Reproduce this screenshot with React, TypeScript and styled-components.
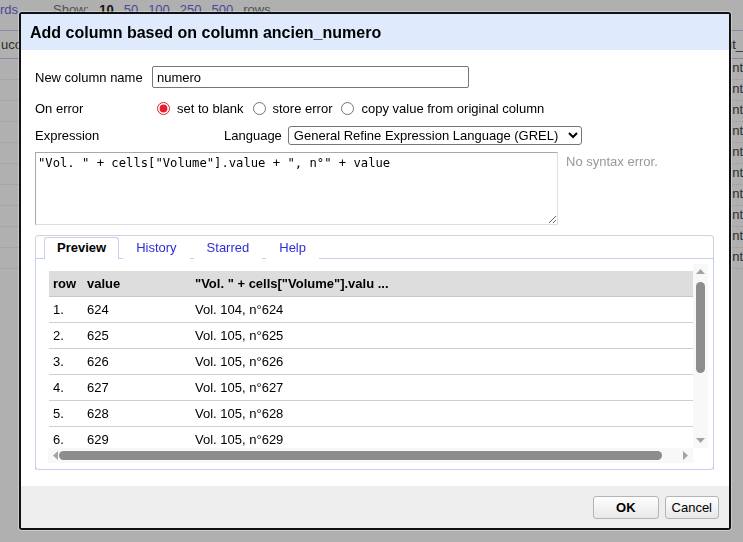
import React from "react";
import styled, { createGlobalStyle } from "styled-components";

const GlobalStyle = createGlobalStyle`
  html, body {
    margin: 0;
    padding: 0;
  }
  body {
    width: 743px;
    height: 542px;
    overflow: hidden;
    background: #fff;
    font-family: "Liberation Sans", Arial, sans-serif;
    font-size: 13px;
    color: #000;
  }
`;

/* ---------- page behind the dialog ---------- */

const Page = styled.div`
  position: relative;
  width: 743px;
  height: 542px;
  overflow: hidden;
`;

const ViewBar = styled.div`
  display: flex;
  gap: 10px;
  height: 28px;
  padding-top: 2px;
  line-height: 16px;
  white-space: nowrap;
  color: #777;
`;

const PageLink = styled.span<{ $current?: boolean }>`
  color: ${p => (p.$current ? "#222" : "#6b6be0")};
  font-weight: ${p => (p.$current ? "bold" : "normal")};
`;

const ShowLabel = styled.span`
  margin-left: 25px;
`;

const BgRow = styled.div<{ $head?: boolean }>`
  display: flex;
  height: ${p => (p.$head ? "27px" : "19px")};
  line-height: ${p => (p.$head ? "27px" : "16px")};
  padding-top: ${p => (p.$head ? "0" : "1px")};
  border-top: ${p => (p.$head ? "1px solid #c8c8ee" : "none")};
  border-bottom: ${p => (p.$head ? "1px solid #c8c8ee" : "1px dotted #e2e2e2")};
  color: #444;
  white-space: nowrap;
`;

const BgLeftCell = styled.div`
  width: 732px;
  padding-left: 1px;
`;

const BgRightCell = styled.div`
  flex: 1;
`;

const Overlay = styled.div`
  position: fixed;
  inset: 0;
  background: rgba(0, 0, 0, 0.31);
`;

/* ---------- dialog ---------- */

const Dialog = styled.div`
  position: absolute;
  left: 19px;
  top: 12px;
  width: 712px;
  height: 518px;
  box-sizing: border-box;
  border: 2px solid #111;
  border-radius: 3px;
  background: #fff;
  box-shadow: 0 0 0 1px rgba(255, 255, 255, 0.35);
  display: flex;
  flex-direction: column;
  overflow: hidden;
`;

const DialogHeader = styled.div`
  flex: none;
  height: 36px;
  display: flex;
  align-items: center;
  padding: 1px 0 0 9px;
  box-sizing: border-box;
  background: #dfebfc;
  font-size: 16px;
  font-weight: bold;
`;

const DialogBody = styled.div`
  flex: 1;
  display: flex;
  flex-direction: column;
  padding: 0 15px 0 14px;
`;

const DialogFooter = styled.div`
  flex: none;
  height: 42px;
  box-sizing: border-box;
  display: flex;
  justify-content: flex-end;
  align-items: flex-start;
  gap: 6px;
  padding: 10px 10px 0 0;
  background: #eee;
`;

const Button = styled.button<{ $primary?: boolean }>`
  height: 23px;
  box-sizing: border-box;
  padding: 0 ${p => (p.$primary ? "22px" : "6px")};
  font-family: "Liberation Sans", Arial, sans-serif;
  font-size: 13px;
  font-weight: ${p => (p.$primary ? "bold" : "normal")};
  color: #000;
  border: 1px solid #b5b5b5;
  border-radius: 3px;
  background: linear-gradient(#fefefe, #e8e8e8);
`;

const FieldRow = styled.div<{ $top: number; $height: number }>`
  display: flex;
  align-items: center;
  margin-top: ${p => p.$top}px;
  height: ${p => p.$height}px;
`;

const FieldLabel = styled.label`
  flex: none;
  width: 117px;
`;

const TextInput = styled.input`
  width: 317px;
  height: 22px;
  box-sizing: border-box;
  padding: 1px 4px;
  border: 1px solid #767676;
  border-radius: 2px;
  font-family: "Liberation Sans", Arial, sans-serif;
  font-size: 13px;
  color: #000;
`;

const RadioOption = styled.label`
  display: inline-flex;
  align-items: center;
  margin-right: 4px;
  white-space: nowrap;
`;

const Radio = styled.input`
  width: 13px;
  height: 13px;
  margin: 0 7px 0 5px;
  accent-color: #e4202c;
`;

const ExpressionLabel = styled.span`
  flex: none;
  width: 189px;
`;

const LanguageLabel = styled.span`
  margin-right: 5px;
`;

const LanguageSelect = styled.select`
  width: 294px;
  height: 19px;
  box-sizing: border-box;
  margin-left: 1px;
  padding: 0 1px;
  border: 1px solid #767676;
  border-radius: 3px;
  background: #fff;
  font-family: "Liberation Sans", Arial, sans-serif;
  font-size: 13px;
  color: #000;
`;

const ExpressionRow = styled.div`
  display: flex;
  align-items: flex-start;
  gap: 8px;
  margin-top: 7px;
`;

const ExpressionArea = styled.textarea`
  width: 523px;
  height: 73px;
  box-sizing: border-box;
  padding: 3px 2px;
  border: 1px solid;
  border-color: #a8a8a8 #dedede #dedede #a8a8a8;
  font-family: "DejaVu Sans Mono", "Liberation Mono", monospace;
  font-size: 12.2px;
  line-height: 15px;
  color: #000;
`;

const StatusText = styled.span`
  color: #999;
  padding-top: 2px;
`;

/* ---------- tabs ---------- */

const TabsBox = styled.div`
  margin-top: 10px;
  height: 235px;
  box-sizing: border-box;
  display: flex;
  flex-direction: column;
  border: 1px solid #d3d3d3;
  border-bottom: none;
  border-radius: 4px 4px 0 0;
`;

const TabNav = styled.div`
  display: flex;
  gap: 4px;
  padding: 1px 8px 0;
`;

const Tab = styled.div<{ $active?: boolean }>`
  position: relative;
  z-index: 1;
  height: 22px;
  box-sizing: border-box;
  margin-bottom: -1px;
  padding: 0 12px;
  line-height: 19px;
  border: 1px solid ${p => (p.$active ? "#c5cdf2" : "transparent")};
  border-bottom: none;
  border-radius: 3px 3px 0 0;
  background: #fff;
  color: ${p => (p.$active ? "#000" : "#2e2ed8")};
  font-weight: ${p => (p.$active ? "bold" : "normal")};
`;

const TabPanel = styled.div`
  flex: 1;
  margin: 0 -1px;
  padding: 5px 5px 6px 12px;
  border: 1px solid #c5cdf2;
  border-radius: 0 0 4px 4px;
`;

const Scroller = styled.div`
  height: 199px;
  display: grid;
  grid-template-columns: 1fr 15px;
  grid-template-rows: 1fr 15px;
`;

const Viewport = styled.div`
  overflow: hidden;
  padding: 7px 0 0 1px;
`;

const VTrack = styled.div`
  display: flex;
  flex-direction: column;
  align-items: center;
  background: #f8f8f8;
`;

const HTrack = styled.div`
  display: flex;
  align-items: center;
  background: #f8f8f8;
`;

const Corner = styled.div`
  background: #fff;
`;

const ArrowBox = styled.div`
  flex: none;
  width: 15px;
  height: 15px;
  display: flex;
  align-items: center;
  justify-content: center;
`;

const VThumb = styled.div`
  width: 9px;
  height: 91px;
  margin-top: 3px;
  border-radius: 5px;
  background: #8d8d8d;
`;

const Spacer = styled.div`
  flex: 1;
`;

const HThumb = styled.div`
  height: 9px;
  width: 603px;
  margin-left: -4px;
  border-radius: 5px;
  background: #8d8d8d;
`;

const PreviewTable = styled.table`
  width: 680px;
  border-collapse: collapse;
  table-layout: fixed;
`;

const HeadCell = styled.th<{ $w?: number }>`
  width: ${p => (p.$w ? `${p.$w}px` : "auto")};
  height: 25px;
  padding: 0 4px;
  text-align: left;
  white-space: nowrap;
  background: #ddd;
  border-bottom: 1px solid #c8c8c8;
`;

const Cell = styled.td`
  height: 25px;
  padding: 0 4px;
  white-space: nowrap;
  border-bottom: 1px solid #cfcfcf;
`;

const Arrow = ({ dir }: { dir: "up" | "down" | "left" | "right" }) => {
  const pts = {
    up: "0,5 4.5,0 9,5",
    down: "0,0 4.5,5 9,0",
    left: "5,0 0,4.5 5,9",
    right: "0,0 5,4.5 0,9",
  }[dir];
  const vertical = dir === "up" || dir === "down";
  return (
    <svg width={vertical ? 9 : 5} height={vertical ? 5 : 9}>
      <polygon points={pts} fill="#a3a3a3" />
    </svg>
  );
};

const rows = [
  [624, 104],
  [625, 105],
  [626, 105],
  [627, 105],
  [628, 105],
  [629, 105],
];

export default function App() {
  return (
    <>
      <GlobalStyle />
      <Page>
        <ViewBar>
          <PageLink>rds</PageLink>
          <ShowLabel>Show:</ShowLabel>
          <PageLink $current>10</PageLink>
          <PageLink>50</PageLink>
          <PageLink>100</PageLink>
          <PageLink>250</PageLink>
          <PageLink>500</PageLink>
          <span>rows</span>
        </ViewBar>
        <BgRow $head>
          <BgLeftCell>ucode</BgLeftCell>
          <BgRightCell>ut_</BgRightCell>
        </BgRow>
        {Array.from({ length: 10 }).map((_, i) => (
          <BgRow key={i}>
            <BgLeftCell />
            <BgRightCell>nt</BgRightCell>
          </BgRow>
        ))}
        <Overlay />

        <Dialog>
          <DialogHeader>Add column based on column ancien_numero</DialogHeader>
          <DialogBody>
            <FieldRow $top={16} $height={22}>
              <FieldLabel>New column name</FieldLabel>
              <TextInput defaultValue="numero" />
            </FieldRow>

            <FieldRow $top={10} $height={20}>
              <FieldLabel>On error</FieldLabel>
              <RadioOption>
                <Radio type="radio" name="onerror" defaultChecked />
                set to blank
              </RadioOption>
              <RadioOption>
                <Radio type="radio" name="onerror" />
                store error
              </RadioOption>
              <RadioOption>
                <Radio type="radio" name="onerror" />
                copy value from original column
              </RadioOption>
            </FieldRow>

            <FieldRow $top={8} $height={19}>
              <ExpressionLabel>Expression</ExpressionLabel>
              <LanguageLabel>Language</LanguageLabel>
              <LanguageSelect defaultValue="grel">
                <option value="grel">General Refine Expression Language (GREL)</option>
              </LanguageSelect>
            </FieldRow>

            <ExpressionRow>
              <ExpressionArea
                spellCheck={false}
                defaultValue={'"Vol. " + cells["Volume"].value + ", n°" + value'}
              />
              <StatusText>No syntax error.</StatusText>
            </ExpressionRow>

            <TabsBox>
              <TabNav>
                <Tab $active>Preview</Tab>
                <Tab>History</Tab>
                <Tab>Starred</Tab>
                <Tab>Help</Tab>
              </TabNav>
              <TabPanel>
                <Scroller>
                  <Viewport>
                    <PreviewTable>
                      <thead>
                        <tr>
                          <HeadCell $w={26}>row</HeadCell>
                          <HeadCell $w={100}>value</HeadCell>
                          <HeadCell>"Vol. " + cells["Volume"].valu ...</HeadCell>
                        </tr>
                      </thead>
                      <tbody>
                        {rows.map(([n, vol], i) => (
                          <tr key={n}>
                            <Cell>{i + 1}.</Cell>
                            <Cell>{n}</Cell>
                            <Cell>
                              Vol. {vol}, n°{n}
                            </Cell>
                          </tr>
                        ))}
                      </tbody>
                    </PreviewTable>
                  </Viewport>
                  <VTrack>
                    <ArrowBox>
                      <Arrow dir="up" />
                    </ArrowBox>
                    <VThumb />
                    <Spacer />
                    <ArrowBox>
                      <Arrow dir="down" />
                    </ArrowBox>
                  </VTrack>
                  <HTrack>
                    <ArrowBox>
                      <Arrow dir="left" />
                    </ArrowBox>
                    <HThumb />
                    <Spacer />
                    <ArrowBox>
                      <Arrow dir="right" />
                    </ArrowBox>
                  </HTrack>
                  <Corner />
                </Scroller>
              </TabPanel>
            </TabsBox>
          </DialogBody>
          <DialogFooter>
            <Button $primary>OK</Button>
            <Button>Cancel</Button>
          </DialogFooter>
        </Dialog>
      </Page>
    </>
  );
}
